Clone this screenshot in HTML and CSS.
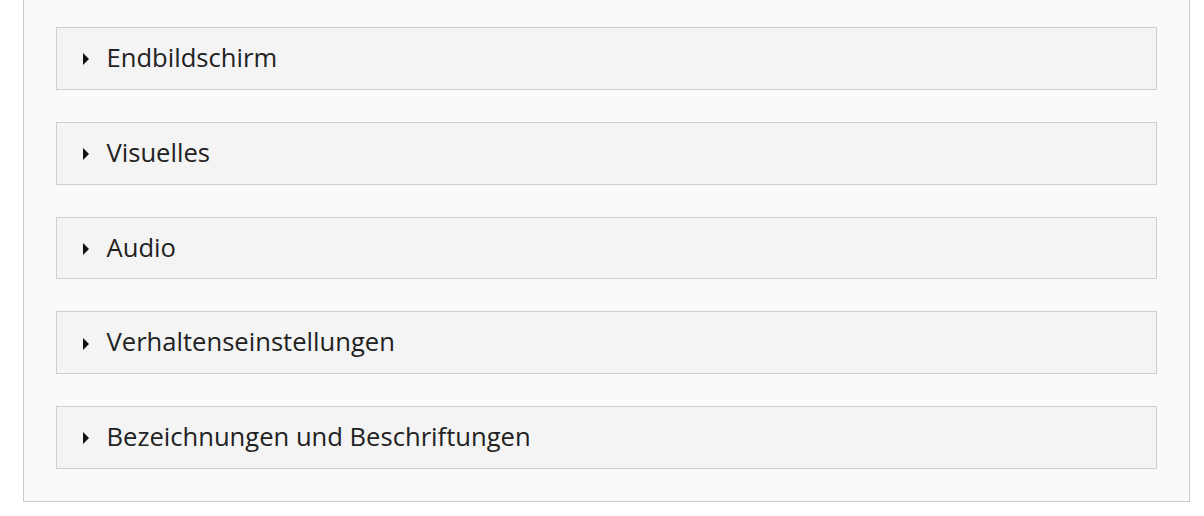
FILE: index.html
```html
<!DOCTYPE html>
<html lang="de">
<head>
<meta charset="utf-8">
<link rel="stylesheet" href="styles.css">
</head>
<body>
<div class="panel">
  <div class="section"><span class="arrow"></span><span class="label">Endbildschirm</span></div>
  <div class="section"><span class="arrow"></span><span class="label">Visuelles</span></div>
  <div class="section"><span class="arrow"></span><span class="label">Audio</span></div>
  <div class="section"><span class="arrow"></span><span class="label">Verhaltenseinstellungen</span></div>
  <div class="section"><span class="arrow"></span><span class="label">Bezeichnungen und Beschriftungen</span></div>
</div>
</body>
</html>
```
FILE: styles.css
```css
html, body {
  margin: 0;
  padding: 0;
  background: #ffffff;
}
body {
  font-family: "Open Sans", "Liberation Sans", sans-serif;
  padding: 0 14px 0 23px;
}
.panel {
  margin-top: -6px;
  background: #fafafa;
  border: 1px solid #cccccc;
  padding: 32px;
  display: flex;
  flex-direction: column;
  gap: 32px;
}
.section {
  height: 60.75px;
  background: #f4f4f4;
  border: 1px solid #cfcfcf;
  display: flex;
  align-items: center;
  padding-left: 26px;
}
.arrow {
  width: 0;
  height: 0;
  border-top: 6px solid transparent;
  border-bottom: 6px solid transparent;
  border-left: 6.5px solid #111111;
  margin-right: 17.5px;
  margin-top: 2px;
}
.label {
  font-size: 25.6px;
  line-height: 1.2;
  color: #222222;
}
```
